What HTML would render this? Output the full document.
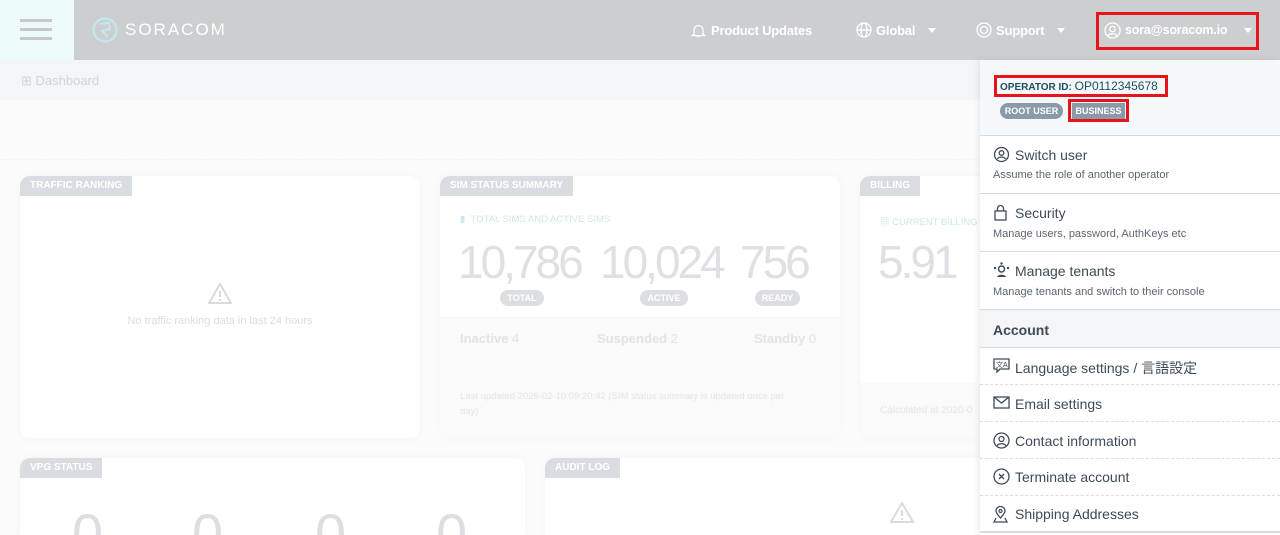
<!DOCTYPE html>
<html style="width:1280px;height:535px;overflow:hidden"><head><meta charset="utf-8"><style>
*{box-sizing:border-box;margin:0;padding:0}
body{width:1280px;height:535px;overflow:hidden;background:#fbfbfb;font-family:"Liberation Sans","Noto Sans CJK JP",sans-serif;position:relative}
.a{position:absolute}
.hdr{left:0;top:0;width:1280px;height:60px;background:#cdced0}
.nav{color:#fff;font-size:13px;font-weight:bold;top:23px;letter-spacing:-0.2px}
.card{background:#fff;border-radius:10px;box-shadow:0 0 10px rgba(0,0,0,.03);overflow:hidden}
.tag{background:#d9dce0;color:#fff;font-size:10px;font-weight:bold;height:20px;line-height:20px;padding:0 10px;top:0;left:0;border-top-left-radius:8px}
.big{color:#dfe0e3;font-size:46px;letter-spacing:-3px}
.pill{background:#dcdee2;color:#fff;font-size:9px;font-weight:bold;border-radius:9px;height:16px;line-height:16px;text-align:center}
.g{color:#e2e3e5}
.dd{left:980px;top:60px;width:300px;height:475px;background:#fff;box-shadow:-2px 0 6px rgba(0,0,0,.08);overflow:hidden}
.it{position:absolute;left:0;width:300px;border-bottom:1px solid #d5dbe2}
.it .t{position:absolute;left:35px;font-size:14px;color:#3e4a57}
.it .s{position:absolute;left:13px;font-size:11px;color:#5b6570}
.ic{position:absolute;left:13px}
.row{border-bottom:1px dashed #d8dde3}
.z{position:absolute;top:48px;height:29px;overflow:hidden;font-size:56px;line-height:56px;color:#dcdee1}
</style></head><body>
<div class="a hdr"></div>
<div class="a" style="left:0;top:0;width:74px;height:60px;background:#eefbfb"></div>
<div class="a" style="left:20px;top:19px;width:32px;height:3px;background:#c7c9cb"></div>
<div class="a" style="left:20px;top:28px;width:32px;height:3px;background:#c7c9cb"></div>
<div class="a" style="left:20px;top:37px;width:32px;height:3px;background:#c7c9cb"></div>
<svg class="a" style="left:91px;top:16px" width="28" height="28" viewBox="0 0 28 28"><circle cx="14" cy="14" r="11.5" fill="none" stroke="#bfe9ec" stroke-width="2.2"/><path d="M9 8 L18 7 L19 13 L11 15 L17 21" fill="none" stroke="#bfe9ec" stroke-width="2"/></svg>
<div class="a" style="left:125px;top:20px;color:#fff;font-size:17px;letter-spacing:2px">SORACOM</div>
<svg class="a" style="left:691px;top:23px" width="15" height="15" viewBox="0 0 15 15"><path d="M3 11V7a4.5 4.5 0 019 0v4l1.5 1.5h-12z M6 13.5h3" fill="none" stroke="#fff" stroke-width="1.3"/></svg>
<div class="a nav" style="left:711px">Product Updates</div>
<svg class="a" style="left:856px;top:22px" width="16" height="16" viewBox="0 0 16 16"><circle cx="8" cy="8" r="7" fill="none" stroke="#fff" stroke-width="1.3"/><ellipse cx="8" cy="8" rx="3" ry="7" fill="none" stroke="#fff" stroke-width="1.3"/><path d="M1 8h14" stroke="#fff" stroke-width="1.3"/></svg>
<div class="a nav" style="left:876px">Global</div>
<div class="a" style="left:928px;top:28px;border:4px solid transparent;border-top:5px solid #fff"></div>
<svg class="a" style="left:976px;top:22px" width="16" height="16" viewBox="0 0 16 16"><circle cx="8" cy="8" r="7" fill="none" stroke="#fff" stroke-width="1.3"/><circle cx="8" cy="8" r="3.5" fill="none" stroke="#fff" stroke-width="1.3"/></svg>
<div class="a nav" style="left:996px">Support</div>
<div class="a" style="left:1057px;top:28px;border:4px solid transparent;border-top:5px solid #fff"></div>
<div class="a" style="left:1096px;top:12px;width:163px;height:38px;border:3px solid #e8141c"></div>
<svg class="a" style="left:1104px;top:22px" width="17" height="17" viewBox="0 0 17 17"><circle cx="8.5" cy="8.5" r="7.5" fill="none" stroke="#fff" stroke-width="1.3"/><circle cx="8.5" cy="7" r="2.7" fill="none" stroke="#fff" stroke-width="1.3"/><path d="M4 14c1-3 8-3 9 0" fill="none" stroke="#fff" stroke-width="1.3"/></svg>
<div class="a nav" style="left:1125px;font-size:12.5px">sora@soracom.io</div>
<div class="a" style="left:1244px;top:28px;border:4px solid transparent;border-top:5px solid #fff"></div>

<div class="a" style="left:0;top:60px;width:980px;height:40px;background:#f4f5f6"></div>
<div class="a" style="left:21px;top:73px;font-size:13px;color:#d2d4d6">⊞ Dashboard</div>
<div class="a" style="left:0;top:159px;width:980px;border-top:1px dashed #f3f3f3"></div>

<div class="a card" style="left:20px;top:176px;width:400px;height:262px">
<div class="a tag">TRAFFIC RANKING</div>
<svg class="a" style="left:187px;top:106px" width="26" height="23" viewBox="0 0 26 23"><path d="M13 2L24 21H2Z" fill="none" stroke="#d8dadd" stroke-width="2" stroke-linejoin="round"/><path d="M13 9v6M13 17v2" stroke="#d8dadd" stroke-width="2"/></svg>
<div class="a" style="left:0;width:400px;top:139px;text-align:center;font-size:11px;color:#dcdde0">No traffic ranking data in last 24 hours</div>
</div>

<div class="a card" style="left:440px;top:176px;width:400px;height:262px;background:#fafafb">
<div class="a" style="left:0;top:0;width:400px;height:141px;background:#fff"></div>
<div class="a tag">SIM STATUS SUMMARY</div>
<div class="a" style="left:20px;top:38px;font-size:9.5px;color:#cfe7ea">▮ &nbsp;TOTAL SIMS AND ACTIVE SIMS</div>
<div class="a big" style="left:18px;top:59px">10,786</div>
<div class="a big" style="left:160px;top:59px">10,024</div>
<div class="a big" style="left:300px;top:59px">756</div>
<div class="a pill" style="left:60px;top:114px;width:44px">TOTAL</div>
<div class="a pill" style="left:200px;top:114px;width:48px">ACTIVE</div>
<div class="a pill" style="left:315px;top:114px;width:45px">READY</div>
<div class="a" style="left:0;top:141px;width:400px;border-top:1px solid #f3f3f3"></div>
<div class="a g" style="left:20px;top:155px;font-size:13px"><b>Inactive</b> 4</div>
<div class="a g" style="left:157px;top:155px;font-size:13px"><b>Suspended</b> 2</div>
<div class="a g" style="left:314px;top:155px;font-size:13px"><b>Standby</b> 0</div>
<div class="a g" style="left:20px;top:213px;width:340px;font-size:9.5px;line-height:15px;color:#e4e5e7">Last updated 2026-02-10 09:20:42 (SIM status summary is updated once per day)</div>
</div>

<div class="a card" style="left:860px;top:176px;width:140px;height:262px;background:#fafafb">
<div class="a" style="left:0;top:0;width:140px;height:207px;background:#fff"></div>
<div class="a tag">BILLING</div>
<div class="a" style="left:20px;top:38px;font-size:9.5px;color:#cfe7ea;white-space:nowrap">▦ CURRENT BILLING</div>
<div class="a big" style="left:18px;top:59px">5.91</div>
<div class="a" style="left:20px;top:229px;font-size:10px;color:#e4e5e7;white-space:nowrap">Calculated at 2020-0</div>
</div>

<div class="a card" style="left:20px;top:458px;width:505px;height:77px;border-radius:10px 10px 0 0">
<div class="a tag">VPG STATUS</div>
<div class="z" style="left:52px">0</div>
<div class="z" style="left:172px">0</div>
<div class="z" style="left:295px">0</div>
<div class="z" style="left:416px">0</div>
</div>
<div class="a card" style="left:545px;top:458px;width:460px;height:77px;border-radius:10px 10px 0 0">
<div class="a tag">AUDIT LOG</div>
<svg class="a" style="left:344px;top:43px" width="26" height="23" viewBox="0 0 26 23"><path d="M13 2L24 21H2Z" fill="none" stroke="#d8dadd" stroke-width="2" stroke-linejoin="round"/><path d="M13 9v6M13 17v2" stroke="#d8dadd" stroke-width="2"/></svg>
</div>

<div class="a dd">
<div class="it" style="top:0;height:76px;background:#f4f8fb">
<div class="a" style="left:14px;top:15px;width:174px;height:22px;border:3px solid #e8141c"></div>
<div class="a" style="left:20px;top:19px;font-size:10px;font-weight:bold;color:#1f4e63">OPERATOR ID: <span style="font-weight:normal;font-size:12px;color:#1f4e63">OP0112345678</span></div>
<div class="a" style="left:20px;top:43px;width:63px;height:16px;border-radius:8px;background:#8a9aa8;color:#fff;font-size:9px;font-weight:bold;text-align:center;line-height:16px">ROOT USER</div>
<div class="a" style="left:88px;top:39px;width:61px;height:23px;border:3px solid #e8141c"></div>
<div class="a" style="left:92px;top:43px;width:53px;height:16px;background:#8a9aa8;color:#fff;font-size:9px;font-weight:bold;text-align:center;line-height:16px">BUSINESS</div>
</div>
<div class="it" style="top:76px;height:58px">
<svg class="ic" style="top:10px" width="17" height="17" viewBox="0 0 17 17"><circle cx="8.5" cy="8.5" r="7" fill="none" stroke="#3e4a57" stroke-width="1.3"/><circle cx="8.5" cy="7" r="2.3" fill="none" stroke="#3e4a57" stroke-width="1.3"/><path d="M4.5 13c1-2.5 7-2.5 8 0" fill="none" stroke="#3e4a57" stroke-width="1.3"/></svg>
<div class="t" style="top:11px">Switch user</div><div class="s" style="top:33px">Assume the role of another operator</div></div>
<div class="it" style="top:134px;height:58px">
<svg class="ic" style="top:10px" width="15" height="17" viewBox="0 0 15 17"><rect x="2" y="7" width="11" height="9" fill="none" stroke="#3e4a57" stroke-width="1.3"/><path d="M4.5 7V4.5a3 3 0 016 0V7" fill="none" stroke="#3e4a57" stroke-width="1.3"/></svg>
<div class="t" style="top:11px">Security</div><div class="s" style="top:34px">Manage users, password, AuthKeys etc</div></div>
<div class="it" style="top:192px;height:58px">
<svg class="ic" style="top:10px" width="17" height="17" viewBox="0 0 17 17"><circle cx="8.5" cy="7" r="3" fill="none" stroke="#3e4a57" stroke-width="1.5"/><path d="M4 15c1-3 8-3 9 0z" fill="#3e4a57"/><circle cx="2" cy="6" r="1.2" fill="#3e4a57"/><circle cx="15" cy="6" r="1.2" fill="#3e4a57"/><circle cx="8.5" cy="1.5" r="1.2" fill="#3e4a57"/></svg>
<div class="t" style="top:11px">Manage tenants</div><div class="s" style="top:34px">Manage tenants and switch to their console</div></div>
<div class="it" style="top:250px;height:38px;background:#f4f5f7"><div class="a" style="left:13px;top:12px;font-size:14px;font-weight:bold;color:#3e4a57">Account</div></div>
<div class="it row" style="top:288px;height:37px">
<svg class="ic" style="top:10px" width="17" height="15" viewBox="0 0 17 15"><path d="M1 1h15v10H7l-3 3v-3H1z" fill="none" stroke="#3e4a57" stroke-width="1.3"/><text x="3" y="9" font-size="7" fill="#3e4a57" font-family="Liberation Sans">文A</text></svg>
<div class="t" style="top:10px">Language settings / 言語設定</div></div>
<div class="it row" style="top:325px;height:37px">
<svg class="ic" style="top:11px" width="17" height="13" viewBox="0 0 17 13"><rect x="1" y="1" width="15" height="11" fill="none" stroke="#3e4a57" stroke-width="1.3"/><path d="M1 1l7.5 6L16 1" fill="none" stroke="#3e4a57" stroke-width="1.3"/></svg>
<div class="t" style="top:11px">Email settings</div></div>
<div class="it row" style="top:362px;height:37px">
<svg class="ic" style="top:10px" width="17" height="17" viewBox="0 0 17 17"><circle cx="8.5" cy="8.5" r="7.5" fill="none" stroke="#3e4a57" stroke-width="1.3"/><circle cx="8.5" cy="7" r="2.5" fill="none" stroke="#3e4a57" stroke-width="1.3"/><path d="M4 14c1-3 8-3 9 0" fill="none" stroke="#3e4a57" stroke-width="1.3"/></svg>
<div class="t" style="top:11px">Contact information</div></div>
<div class="it row" style="top:399px;height:37px">
<svg class="ic" style="top:9px" width="17" height="17" viewBox="0 0 17 17"><circle cx="8.5" cy="8.5" r="7.5" fill="none" stroke="#3e4a57" stroke-width="1.3"/><path d="M6 6l5 5M11 6l-5 5" stroke="#3e4a57" stroke-width="1.3"/></svg>
<div class="t" style="top:10px">Terminate account</div></div>
<div class="it" style="top:436px;height:37px;border-bottom:2px solid #d5dbe2">
<svg class="ic" style="top:10px" width="15" height="17" viewBox="0 0 15 17"><path d="M7.5 12C4 8 3 6.5 3 5a4.5 4.5 0 019 0c0 1.5-1 3-4.5 7z" fill="none" stroke="#3e4a57" stroke-width="1.3"/><circle cx="7.5" cy="5" r="1.5" fill="none" stroke="#3e4a57" stroke-width="1.2"/><path d="M3 12l-2 4h13l-2-4" fill="none" stroke="#3e4a57" stroke-width="1.3"/></svg>
<div class="t" style="top:10px">Shipping Addresses</div></div>
</div>
</body></html>
